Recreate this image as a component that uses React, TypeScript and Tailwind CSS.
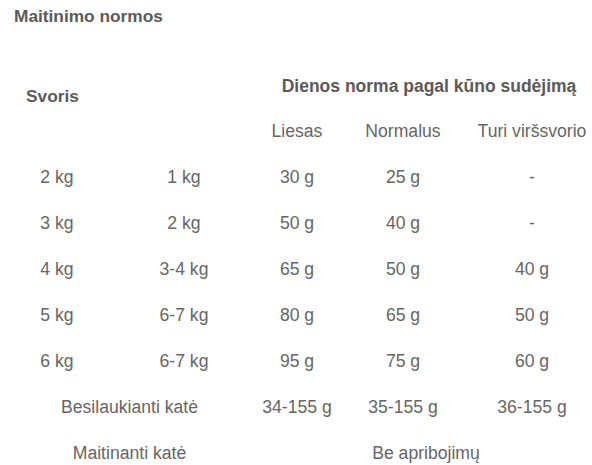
import React from "react";

const rows: string[][] = [
  ["2 kg", "1 kg", "30 g", "25 g", "-"],
  ["3 kg", "2 kg", "50 g", "40 g", "-"],
  ["4 kg", "3-4 kg", "65 g", "50 g", "40 g"],
  ["5 kg", "6-7 kg", "80 g", "65 g", "50 g"],
  ["6 kg", "6-7 kg", "95 g", "75 g", "60 g"],
];

export default function App() {
  return (
    <div
      className="w-[592px] h-[465px] overflow-hidden bg-white text-[#666] text-[17.6px]"
      style={{ fontFamily: '"Liberation Sans", Arial, sans-serif' }}
    >
      <div className="pl-[14px] pt-[6px] leading-[21px] font-bold text-[17.3px] text-[#5a5a5a]">
        Maitinimo normos
      </div>
      <div className="mt-[37px] w-[598px] grid grid-cols-[114px_140px_86px_126px_132px] grid-rows-[44px_46px] auto-rows-[46px] leading-[46px]">
        <div className="row-span-2 col-span-2 pl-[26px] pt-[22px] leading-[20px] font-bold text-[17.3px] text-[#5a5a5a]">
          Svoris
        </div>
        <div className="col-span-3 pl-[6px] text-center leading-[44px] font-bold text-[17.5px] text-[#5a5a5a]">
          Dienos norma pagal kūno sudėjimą
        </div>
        <div className="text-center">Liesas</div>
        <div className="text-center">Normalus</div>
        <div className="text-center">Turi viršsvorio</div>
        {rows.map((r, i) => (
          <React.Fragment key={i}>
            {r.map((c, j) => (
              <div key={j} className="text-center">
                {c}
              </div>
            ))}
          </React.Fragment>
        ))}
        <div className="col-span-2 pl-[5px] text-center">Besilaukianti katė</div>
        <div className="text-center">34-155 g</div>
        <div className="text-center">35-155 g</div>
        <div className="text-center">36-155 g</div>
        <div className="col-span-2 pl-[5px] text-center">Maitinanti katė</div>
        <div className="col-span-3 text-center">Be apribojimų</div>
      </div>
    </div>
  );
}
